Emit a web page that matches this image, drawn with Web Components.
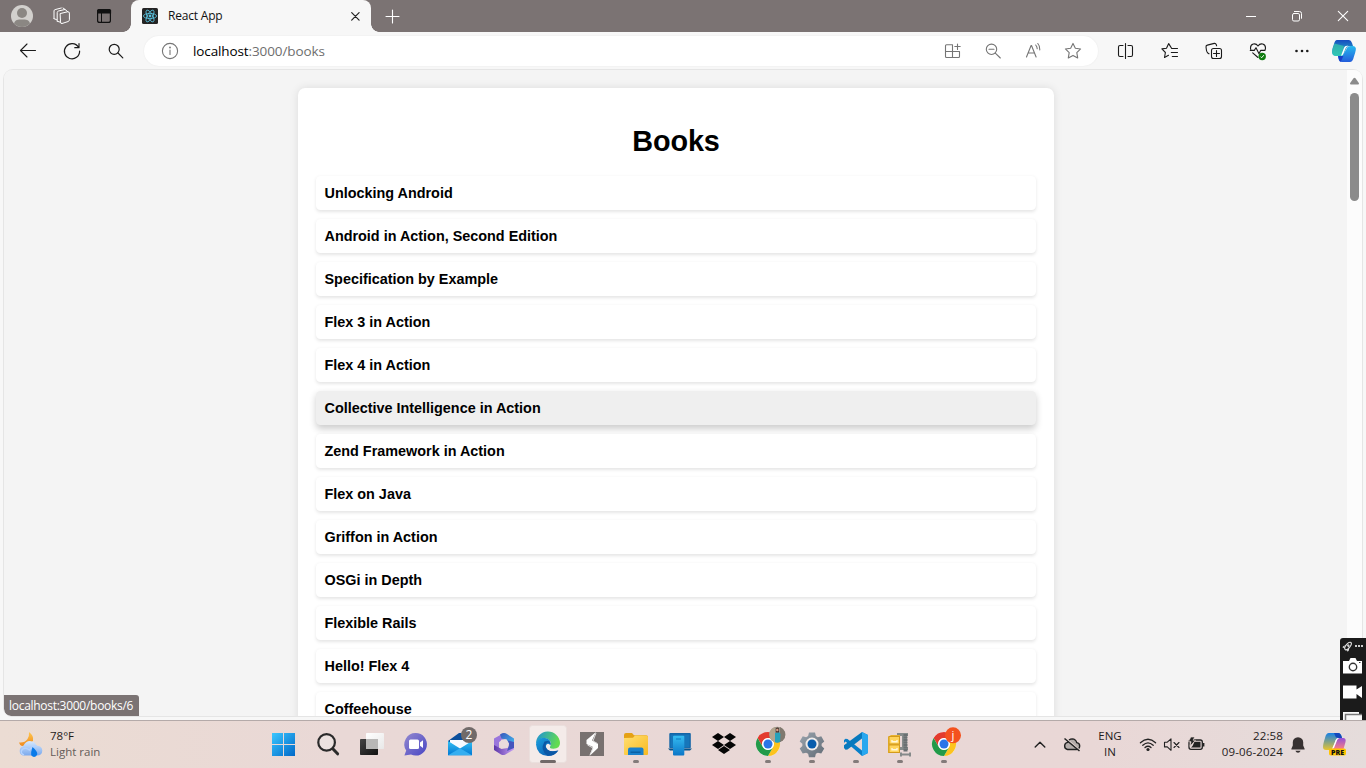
<!DOCTYPE html>
<html lang="en"><head><meta charset="utf-8"><title>React App</title>
<style>html,body{margin:0;height:100%;overflow:hidden;font-family:"Open Sans","Noto Sans",sans-serif}</style></head>
<body><desktop-screen></desktop-screen>
<script>
const line = (c, s, w = 1.2) => `<g fill="none" stroke="${c}" stroke-width="${w}" stroke-linecap="round" stroke-linejoin="round">${s}</g>`;
const grad = (id, a, b, v = 'x2="1" y2="1"') => `<linearGradient id="${id}" ${v}><stop stop-color="${a}"/><stop offset="1" stop-color="${b}"/></linearGradient>`;
const dot = '<rect x="19" y="39" width="6" height="3" rx="1.5" fill="#837b7a"/>';
const chrome = `<circle cx="22" cy="23" r="12" fill="#fff"/><path d="M11.6 17A12 12 0 0 1 32.4 17H22a6 6 0 0 0-5.2 9Z" fill="#e33b2e"/><path d="M32.4 17A12 12 0 0 1 22 35l5.2-9A6 6 0 0 0 22 17Z" fill="#fcc31e"/><path d="M22 35A12 12 0 0 1 11.6 17l5.2 9a6 6 0 0 0 10.4 0Z" fill="#229a49"/><circle cx="22" cy="23" r="5.8" fill="#fff"/><circle cx="22" cy="23" r="4.5" fill="#2b75e8"/>`;

/* Each entry: [width, height, markup] */
const ICONS = {
 avatar:[24,24,'<circle cx="12" cy="12" r="11" fill="#d2d0cd"/><circle cx="12" cy="9" r="5" fill="#8b8783"/><path d="M4 19.5C5 15.6 8 15.4 12 15.4s7 .2 8 4.1a11 11 0 0 1-16 0Z" fill="#8b8783"/>'],
 spaces:[24,24,line('#fff','<path d="M10.5 9.5 17.5 7.8q1.8-.3 1.9 1.3v6.7q0 1.2-1.2 1.7l-6.2 2q-1.5.4-1.5-1.2ZM7.2 17V8.6q0-1.2 1.3-1.6L14.8 5.5M4 14.5V6.9q0-1 1.1-1.3L11.3 4"/><path d="M4 14.7 6.5 15.6M7.2 17.2l2.8.9M13 4l2 1.4 2.6 2.2"/>',1)],
 tabmenu:[24,24,'<rect x="5.6" y="5.6" width="12.800" height="12.800" rx="2" fill="none" stroke="#111" stroke-width="1.200"/><path d="M5 9.600V6.500Q5.300 5 7 5h10.500q1.400 0 1.600 1.500v3.100Z" fill="#111"/><path d="M9.500 9v9.500" stroke="#111"/>'],
 react:[16,16,'<rect width="16" height="16" rx="1.5" fill="#242424"/><g fill="none" stroke="#58bfdc" stroke-width=".85"><ellipse cx="8" cy="8" rx="6.6" ry="2.6"/><ellipse cx="8" cy="8" rx="6.6" ry="2.6" transform="rotate(60 8 8)"/><ellipse cx="8" cy="8" rx="6.6" ry="2.6" transform="rotate(120 8 8)"/></g><circle cx="8" cy="8" r="1.4" fill="#58bfdc"/>'],
 close:[16,16,line('#222','<path d="M4.700 4.700 12.100 12.100M12.100 4.700 4.700 12.100"/>',1.2)],
 plus:[16,16,line('#fff','<path d="M8.500 2v13M2 8.500h13"/>',1.1)],
 min:[16,16,'<path d="M3 8.5h10" stroke="#fff"/>'],
 restore:[16,16,line('#fff','<rect x="3.500" y="5.5" width="7" height="7.5" rx="1.4"/><path d="M5.4 3.500h5.100q2 0 2 2v4.800"/>',1)],
 wclose:[16,16,line('#fff','<path d="M3.3 3.3 12.7 12.7M12.7 3.3 3.3 12.7"/>',1.1)],
 back:[24,24,line('#1b1b1b','<path d="M19.500 11.500H4.700M11 5l-6.500 6.500L11 18"/>',1.1)],
 reload:[24,24,line('#1b1b1b','<path d="M18.5 8.3A7.6 7.6 0 1 0 19.6 12M19 4.7v4h-4.2"/>',1.2)],
 search:[24,24,line('#1b1b1b','<circle cx="10.2" cy="10.3" r="5"/><path d="m14 14 4.8 4.8"/>',1.2)],
 info:[24,24,line('#757575','<circle cx="12" cy="12" r="7.6"/><path d="M12 11v4.5"/>',1.1)+'<circle cx="12" cy="8.5" r=".9" fill="#757575"/>'],
 apps:[24,24,line('#757575','<path d="M11.500 12.5h7v5q0 1-1 1h-12q-1 0-1-1V6.800q0-1 1-1h6v12.700M4.500 12.500h7M16.500 5v5.400M13.800 7.500h5.400"/>',1.1)],
 zoomout:[24,24,line('#757575','<circle cx="10.5" cy="10.3" r="5.2"/><path d="M8 10.3h5M14.3 14.2l5 4.8"/>',1.1)],
 read:[24,24,line('#757575','<path d="M5.500 18 10.100 6.500h.4L15.100 18M7.200 14h6.200M14.700 6q1.500 1.700 1.500 3.800M16.800 4.500q2.500 2.700 2 6.400"/>',1.1)],
 star:[24,24,line('#757575','<path d="m12 4.4 2.35 4.8 5.25.75-3.8 3.7.9 5.25L12 16.4l-4.7 2.5.9-5.25-3.8-3.7 5.25-.75Z"/>',1.1)],
 split:[24,24,line('#1b1b1b','<path d="M9 6.500H6q-1.500 0-1.500 1.500v8q0 1.500 1.500 1.500h3M14 6.500h3q1.500 0 1.500 1.500v8q0 1.500-1.500 1.500h-3M11.500 4.500v15"/>',1.1)],
 favs:[24,24,line('#1b1b1b','<path d="M18.5 9.500h-4.800L10.700 4.600 8.500 9.200l-4.600.7 3.500 3.600-.9 5 4-2.2M13.300 13.500h6.200M14.300 17.500h5.200M14 9.500h5.500"/>',1.1)],
 collect:[24,24,line('#1b1b1b','<rect x="9.500" y="9.500" width="10" height="10" rx="2"/><path d="M14.500 11.500v6M11.500 14.500h6M7 14.800 5.800 14Q4.800 13 4.500 11.500L4 8q-.1-1.600 1.300-1.900l7-1.700q1.500-.2 2 1.200l.3 1.200"/>',1.1)],
 health:[24,24,line('#1b1b1b','<path d="M12 7C9.5 3.4 4.5 4.8 4.5 9q0 .8.3 1.6M12 7c2.5-3.6 7.5-2.2 7.5 2q0 1-.5 2M4.3 11.4h4L10 8.7l3 6 1.6-3.3H19M6.7 13.8 12 18.5"/>',1.1)+'<circle cx="16.200" cy="17.500" r="3.700" fill="#107c10"/><path d="m14.600 17.700 1.100 1 2.100-2.500" fill="none" stroke="#fff"/>'],
 more:[24,24,'<g fill="#1b1b1b"><circle cx="6.500" cy="12" r="1.300"/><circle cx="12" cy="12" r="1.300"/><circle cx="17.300" cy="12" r="1.300"/></g>'],
 copilot:[26,24,'<defs>'+grad('a','#164cc0','#27c5ca','x2="0" y2="1"')+grad('b','#25b9ef','#245ddb','y2="1" x2="0"')+'</defs><path d="M6 1h12q2 0 3 3l1 3h-4q-2 0-3 3l-2.7 7H5q-4 0-4-4 0-3 2-8Q4 1 6 1Z" fill="url(#a)"/><path d="M1.2 12.5Q2 8 3.5 4.5L13 7l-3 9.8H5.2Q2 17 1.2 12.5Z" fill="#39c9a9" opacity=".7"/><path d="M7 17h4.5l4-7q1-3 4-3h2q4 .3 3.3 4-.3 2-2 7-1 5-4 5H11q-3 0-3.4-3Z" fill="url(#b)"/><path d="M7 17h5.4l-2.6 5.8Q8 22 7 17Z" fill="#1940c7"/><path d="m10 16.8 3-8q.6-2 3-2h1.200q-2 1-2.800 3l-2 5q-.7 2-2.400 2Z" fill="#fff"/>'],
 weather:[26,26,'<defs>'+grad('w','#d7e9ff','#7ba9ed','x2="0" y2="1"')+grad('v','#ffc74d','#ef8a20','x2="0" y2="1"')+'</defs><path d="M11 0q5 3.500 4 9l-6 4-5 1Q1.500 13 1 10.500 7 11 9.500 7 11.500 3.500 11 0Z" fill="url(#v)"/><path d="M5 23.500A5 5 0 0 1 5.300 14Q8 8.500 13 9.200q4.500.6 5.500 4.500 5.700.2 5.800 4.800-.1 5-5.300 5Z" fill="url(#w)"/><path d="M6 23Q1.7 21 4 17.8q3-3 7.3.2Q15 13.5 19 14" fill="none" stroke="#b4d3ff" stroke-width="1.5"/><path d="M14.500 15q5.500 4.600 4.700 7.700-3 4.300-6 .5-.5-3 1.300-8.200Z" fill="#087ae9"/>'],
 start:[44,47,'<defs>'+grad('s','#3bc7ff','#0068c8')+'</defs><path d="M10 12h11v11H10ZM22 12h11v11H22ZM10 24h11v11H10ZM22 24h11v11H22Z" fill="url(#s)"/>'],
 tsearch:[44,47,'<circle cx="20.6" cy="21.4" r="8.3" fill="#ece2e0" stroke="#2a2a2a" stroke-width="2.2"/><path d="m26.8 27.8 4.800 5" stroke="#2a2a2a" stroke-width="3" stroke-linecap="round"/>'],
 taskview:[44,47,'<defs>'+grad('t','#444','#111')+grad('u','#fff','#e8e8e8')+'</defs><rect x="10" y="18" width="18" height="16" rx=".8" fill="url(#t)"/><rect x="16" y="12" width="18" height="16" rx=".8" fill="url(#u)"/><path d="M16 18h12v10H16Z" fill="#b8b7b6"/>'],
 chat:[44,47,'<defs>'+grad('c','#9389cf','#4946c4')+'</defs><path d="M21.7 12A11.3 11.3 0 1 1 17 33.6L10.4 34.5l1.8-5A11.3 11.3 0 0 1 21.7 12Z" fill="url(#c)"/><rect x="15" y="18.5" width="10" height="9.4" rx="1.5" fill="#fff"/><path d="m26 21.5 3-2.2v7.6l-3-2.2Z" fill="#fff"/>'],
 mail:[44,47,'<defs>'+grad('m','#35c0f2','#0078d4','y2="1" x2="0"')+'</defs><path d="M10 20 21 12h2l11 8v3H10Z" fill="#0b4f9c"/><path d="M12 19h20v3l-9 7h-2l-9-7Z" fill="#f7fbff"/><path d="M10 20l12 7.500L34 20v14.200H10Z" fill="url(#m)"/><path d="m10 34.200 12-7 12 7Z" fill="#35aef0"/><circle cx="31" cy="14" r="8" fill="#716a69"/><text x="31" y="18.4" text-anchor="middle" font-size="12" fill="#fff">2</text>'],
 m365:[44,47,'<defs>'+grad('o','#5b35a8','#c7a0f5','x2="1" y2="0"')+grad('p','#3755bb','#44c3f4')+'</defs><path d="M22 12 12 17.500v11l5 2V21l8-4Z" fill="#9a76dc"/><path d="M18 13.500q4-2.500 7-.500l7 4.500v8L26.500 22l-2-3.500-5-1Z" fill="url(#p)"/><path d="M32 24v4.500l-9 5.200q-2 .8-4-.3L12 29v-5l7.500 4 6-1Z" fill="url(#o)"/><path d="m26 19.500 6 1.500v6l-7 3 2-6Z" fill="#4655bd"/><path d="m19.500 18.500 5 0 2.500 4-2.500 4.500h-5L17 22.500Z" fill="#eadbdc"/>'],
 edge:[44,47,'<defs>'+grad('e','#1c8fdc','#62dc50','x2="1" y2=".3"')+grad('f','#1aa0e0','#0a4ea6','x2="1" y2="1"')+'</defs><rect x="3.5" y="4.5" width="37" height="37" rx="3" fill="#f4ebe9" stroke="#eadfdd"/><path d="M10 23A12 12 0 0 1 34 22q0 5.500-6.500 5.800-5.500 0-2.800-3.300Q26 19 19.500 17 13 16.500 10 23Z" fill="url(#e)"/><path d="M10 23.500q1-6.500 8-6.700 7.500.7 6.700 7.700Q21.500 21 19.800 25q.7 7.300 12.200 4.500Q29 35 22 35 11 34.500 10 23.500Z" fill="url(#f)"/><path d="M18.500 20.500q-5 8.500 3 14 6.500.5 11-5-7 2.500-11.200-1-3-3.200-1-6 2-2.300 4.400 1-.5-5-6.200-3Z" fill="#0b57a5"/><rect x="14" y="39" width="16" height="3" rx="1.5" fill="#716968"/>'],
 bolt:[44,47,'<path d="M10 11h24v24H10Z" fill="#787170"/><path d="m26 11-9.5 8v4l6.500 3-3.500 9L28 27v-4l-6-3.500Z" fill="#fff"/><path d="m26 12-3 8 4.5 2.500M20 34l3-7-5.500-3" fill="none" stroke="#dedcdc"/>'],
 folder:[44,47,'<defs>'+grad('g','#ffdf72','#f9b91e')+'</defs><path d="M10 14q0-2 2-2h6l2 2.3h12q2 0 2 2V33H10Z" fill="#e5a115"/><path d="m10 17 9-.2 2-2.200h11q2 0 2 2V33q0 1-1 1H11q-1 0-1-1Z" fill="url(#g)"/><path d="M14 34v-5.500q0-2 2-2h11.500q2 0 2 2V34Z" fill="#1980cb"/><path d="M16.500 31.200h10" stroke="#0a5c9f" stroke-width="1.300"/>'+dot],
 phone:[44,47,'<defs>'+grad('h','#36bdf1','#0b76c7','x2="0" y2="1"')+'</defs><rect x="11.3" y="12" width="21.5" height="15.3" rx="1" fill="#1265a7"/><rect x="12.5" y="13.5" width="19" height="13" fill="#1676ba"/><path d="M10 27.500h24l-2 2H12Z" fill="#095389"/><rect x="15" y="14.700" width="11.300" height="19.800" rx="1" fill="url(#h)"/><path d="M18 18h5" stroke="#087cc1"/>'],
 dropbox:[44,47,'<path d="m16 12 6 4-6 4-6-4ZM28 12l6 4-6 4-6-4ZM16 20l6 4-6 4-6-4ZM28 20l6 4-6 4-6-4ZM22 25l6 4-6 4-6-4Z" fill="#050505"/>'],
 chromea:[44,47,chrome+'<defs><clipPath id="k"><circle cx="31.300" cy="13.700" r="8"/></clipPath></defs><g clip-path="url(#k)"><path d="M23 5h17v17H23Z" fill="#9b9488"/><path d="M23 6h6v16h-6Z" fill="#b3a58e"/><path d="M34 5h6v17h-6Z" fill="#80796f"/><path d="m29 12 4-1 1.500 2-.5 9h-5Z" fill="#26a2ba"/><path d="M29.800 7.500q1.700-2 3.200 0v4h-3.200Z" fill="#4c3430"/><circle cx="31.300" cy="9" r="1.200" fill="#d6a187"/></g>'+dot],
 gear:[44,47,'<defs>'+grad('q','#99a3ad','#626c76')+'</defs><path d="m18.8 11 6.4 0 .9 3.6 2.1 1.2 3.6-1 3.2 5.5-2.8 2.5v2.3l2.8 2.6-3.2 5.5-3.6-1-2.1 1.2-.9 3.6h-6.4l-.9-3.6-2.1-1.2-3.6 1L9 27.7l2.8-2.6v-2.3L9 20.3l3.2-5.500 3.6 1 2.1-1.200Z" transform="translate(1.200 1.200) scale(.945)" fill="url(#q)"/><circle cx="22" cy="23" r="6.500" fill="#f1ecea"/><circle cx="22" cy="23" r="4.500" fill="#075cac"/>'+dot],
 code:[44,47,'<path d="m28 11 6 3v18l-6 3-16.5-14.5L10 22v-3l1.5-1.2 2 .2L28 29.4Z" fill="#087fc9"/><path d="M28 11v24l6-3V14Z" fill="#28a7ef"/><path d="m28 11 0 6.500-14.500 11-2 .300L10 27v-2.800Z" fill="#0879bd"/>'+dot],
 zip:[44,47,'<path d="M19 12h11v3h-1v11h1v3H19v-3h5V15h-5Z" fill="#858b8b"/><path d="M27.500 13v18" stroke="#6a7072" stroke-width="4" stroke-dasharray="2 .5"/><path d="m10 16 3-2h9v18H10Z" fill="#e8b32f"/><rect x="11" y="15.500" width="10.500" height="7.500" fill="#ffd45c" stroke="#d39b1c"/><rect x="11" y="24" width="10.500" height="7.500" fill="#ffd45c" stroke="#d39b1c"/><path d="M14 19v1.700h5V19M14 27v1.700h5V27" fill="none" stroke="#fff8dc" stroke-width="1.400"/><path d="M22 33.500h11M23 31.500v4M32 31.500v4" stroke="#858a8a" stroke-width="2"/>'+dot],
 chromej:[44,47,chrome+'<circle cx="31" cy="14.300" r="8" fill="#f4511e"/><text x="31" y="18" text-anchor="middle" font-size="11.500" fill="#fff">j</text>'+dot],
 up:[24,24,line('#222','<path d="m7.2 14.000 4.800-4.800 4.800 4.800"/>',1.4)],
 cloud:[24,24,'<path d="M7.500 16.500A3.600 3.600 0 0 1 7.800 9.400q1-3.500 4.400-3.500 3.600.2 4.500 3.700 3 .3 3 3.400-.2 3.500-3.600 3.500Z" fill="#b5adab" stroke="#222" stroke-width="1.400"/><path d="m5.500 5 14.500 12.500" stroke="#e8d8d5" stroke-width="1.500"/><path d="m4.500 5.500 15 12.500" stroke="#222" stroke-width="1.500"/>'],
 wifi:[24,24,line('#222','<path d="M4.400 9.800q7.600-7 15.200 0M6.800 12.200q5.200-4.700 10.400 0M9 14.500q3-2.600 6 0"/>',1.3)+'<circle cx="12" cy="16.500" r="1.600" fill="#222"/>'],
 vol:[24,24,line('#222','<path d="M4.500 9.200h2.800l3.700-3.400v11.500l-3.700-3.400H4.500ZM14 9.500l5 5M19 9.500l-5 5"/>',1.1)],
 battery:[24,24,'<rect x="5" y="7" width="13.300" height="9.300" rx="2" fill="none" stroke="#222" stroke-width="1.300"/><path d="M10.500 8.800h6v5.700H7l1.500-1.500Z" fill="#222"/><path d="M19.500 10v3.500" stroke="#222" stroke-width="1.800"/><path d="M6.800 4h4L9 7.200h2.500L6 13.200l1-4.500H4.500Z" fill="#222" stroke="#e8d8d5" stroke-width=".700"/>'],
 bell:[24,24,'<path d="M5.400 15.700 6.800 12.500V9.100q.3-4.400 5.200-4.800 4.900.4 5.200 4.800v3.400l1.400 3.200v.9H5.400Z" fill="#373131"/><path d="M9.400 17.700h5.200q-.8 2-2.600 2t-2.600-2Z" fill="#373131"/>'],
 pre:[28,26,'<defs>'+grad('x','#1680e6','#e9c430','x2="0" y2="1"')+grad('y','#9251d8','#fa7f82','x2="0" y2="1"')+'</defs><path d="M8 1h9q3 0 4 5h-4q-2 0-3 4l-3 8H5q-3 0-3-3 0-3 2-9Q5 1 8 1Z" fill="url(#x)"/><path d="M13 1h4q3 0 4 5h-3l-3-.6Z" fill="#1348bd"/><path d="m12 17 3-7q1-4 4-4h3q3.400 0 2.500 4l-2 7Z" fill="url(#y)"/><path d="m11 17 3-7q1-4 4-4-2 1-3 5l-2 5Z" fill="#fff"/><rect x="8" y="16.500" width="17" height="7" rx="1.800" fill="#ffc400"/><text x="16.500" y="22.700" text-anchor="middle" font-size="7" font-weight="800" fill="#111">PRE</text>'],
 rocket:[26,14,'<g transform="rotate(40 8 7)" fill="none" stroke="#ddd"><ellipse cx="8" cy="7" rx="2" ry="4.500" stroke-width="1.200"/><circle cx="8" cy="6.500" r=".700" stroke-width="1"/><path d="M6.200 8 5 10v1l2-.500M9.800 8l1.200 2v1l-2-.500"/></g><path d="M15 6h2v2h-2ZM18 6h2v2h-2ZM21 6h2v2h-2Z" fill="#ccc"/>'],
 camera:[26,20,'<path d="M3 5h6l1.500-3h5L17 5h5v12.500H3Z" fill="#fff"/><circle cx="13" cy="11" r="3.700" fill="#fff" stroke="#333" stroke-width="1.400"/><path d="M19 6.500h1.500" stroke="#333"/>'],
 video:[26,20,'<path d="M3 3.500h13.500v4L22 4v12l-5.500-4v4.500H3Z" fill="#fff"/>'],
 shots:[26,12,'<path d="M3 0h16v2h3v10H3Z" fill="#f8f8f8"/><path d="M5.500 12V2.500H22" fill="none" stroke="#777" stroke-width="1.500"/>']
};
const tpl = html => { const t = document.createElement('template'); t.innerHTML = html; return t; };
const define = (name, html) => { const t = tpl(html);
 customElements.define(name, class extends HTMLElement{ constructor(){ super(); this.attachShadow({mode:'open'}).append(t.content.cloneNode(true)); } }); };

customElements.define('ui-icon', class extends HTMLElement{
 constructor(){ super(); this.attachShadow({mode:'open'}); }
 connectedCallback(){ const [w,h,s] = ICONS[this.getAttribute('name')];
  this.shadowRoot.innerHTML = `<style>:host{display:flex;flex:none;align-items:center;justify-content:center}svg{display:block;flex:none;overflow:visible}</style><svg width="${w}" height="${h}" viewBox="0 0 ${w} ${h}">${s}</svg>`; }
});
define('tab-strip', `<style>
 :host{display:flex;height:32px;background:#7b7373;align-items:center;box-sizing:border-box}
 .a{width:44px}.b{width:36px}.c{width:48px}.tab{margin-left:3px;width:240px;height:32px;background:#f7f7f7;border-radius:8px 8px 0 0;display:flex;align-items:center;box-sizing:border-box;padding:0 8px 0 11px;position:relative}
 .tab:before,.tab:after{content:"";position:absolute;bottom:0;width:8px;height:8px}
 .tab:before{left:-8px;background:radial-gradient(circle at 0 0,transparent 7.500px,#f7f7f7 8px)}
 .tab:after{right:-8px;background:radial-gradient(circle at 100% 0,transparent 7.500px,#f7f7f7 8px)}
 span{flex:1;padding-left:10px;font-size:12px;letter-spacing:-.2px;line-height:32px;color:#111}
 .n{width:42px}.w{width:46px}.fill{flex:1}
 </style><ui-icon class="a" name="avatar"></ui-icon><ui-icon class="b" name="spaces"></ui-icon><ui-icon class="c" name="tabmenu"></ui-icon>
 <div class="tab"><ui-icon name="react"></ui-icon><span>React App</span><ui-icon name="close"></ui-icon></div><ui-icon class="n" name="plus"></ui-icon><div class="fill"></div>
 <ui-icon class="w" name="min"></ui-icon><ui-icon class="w" name="restore"></ui-icon><ui-icon class="w" name="wclose"></ui-icon>`);
define('address-bar', `<style>
 :host{display:flex;width:954px;height:30px;box-sizing:border-box;border-radius:15px;background:#fff;align-items:center;padding:0 5px 0 14px;box-shadow:0 0 2px #0001}
 span{flex:1;padding-left:11px;font-size:13.500px;letter-spacing:-.11px;line-height:30px;color:#6e6e6e}b{font-weight:400;color:#000}.i{width:40px}
 </style><ui-icon name="info"></ui-icon><span><b>localhost</b>:3000/books</span>
 <ui-icon class="i" name="apps"></ui-icon><ui-icon class="i" name="zoomout"></ui-icon><ui-icon class="i" name="read"></ui-icon><ui-icon class="i" name="star"></ui-icon>`);
define('tool-bar', `<style>:host{display:flex;height:38px;background:#f7f7f7;align-items:center;padding:0 2px 0 6px;box-sizing:border-box}ui-icon{width:44px}address-bar{margin:0 6px}.l{width:40px}</style>
 <ui-icon name="back"></ui-icon><ui-icon name="reload"></ui-icon><ui-icon name="search"></ui-icon><address-bar></address-bar>
 <ui-icon name="split"></ui-icon><ui-icon name="favs"></ui-icon><ui-icon name="collect"></ui-icon><ui-icon name="health"></ui-icon><ui-icon name="more"></ui-icon><ui-icon class="l" name="copilot"></ui-icon>`);
define('book-item', `<style>:host{display:block;height:34px;flex:none;box-sizing:border-box;padding:0 8.500px;border-radius:4.500px;background:#fff;box-shadow:0 1.800px 3.600px rgba(0,0,0,.1);font:bold 14.400px/34px "Liberation Sans",Arial,sans-serif;color:#000}
 :host([active]){background:#efefef;box-shadow:0 3.600px 7.200px rgba(0,0,0,.2)}</style><slot></slot>`);
define('book-list', `<style>:host{display:flex;flex-direction:column;box-sizing:border-box;width:756px;height:900px;flex:none;padding:18px;background:#fff;border-radius:7.200px;box-shadow:0 0 9px rgba(0,0,0,.1)}
 h1{margin:18px 0 18px;text-align:center;font:bold 28.800px/34px "Liberation Sans",Arial,sans-serif;letter-spacing:-.1px;color:#000}.rows{display:flex;flex-direction:column;gap:9px}</style><h1>Books</h1><div class="rows"><slot></slot></div>`);
define('scroll-bar', `<style>:host{display:flex;flex-direction:column;align-items:center;width:15px;background:#fcfcfc;padding-top:7px;box-sizing:border-box}svg{display:block}.t{margin-top:8px;width:9px;height:108px;border-radius:4.500px;background:#8b8b8b}</style>
 <svg width="9" height="8"><path d="M3.500 1.300Q4.500 0 5.500 1.300L8.800 6q.6 1.500-.8 1.500H1Q-.4 7.500.2 6Z" fill="#8b8b8b"/></svg><div class="t"></div>`);
define('status-tip', `<style>:host{display:block;position:absolute;left:0;bottom:0;width:135px;height:21px;box-sizing:border-box;background:#7b7373;border-radius:0 3px 0 7px;padding-left:5px;color:#fff;font-size:12px;letter-spacing:-.28px;line-height:21px;white-space:nowrap}</style><slot></slot>`);
define('page-view', `<style>:host{display:block;height:650px;background:#f7f7f7;padding:0 4px;box-sizing:border-box}
 .v{position:relative;display:flex;height:646px;overflow:hidden;background:#f4f4f4;border-radius:8px 8px 4px 7px}
 .f{border-radius:9px 9px 5px 8px;box-shadow:0 0 0 1px #e5e5e5}.m{flex:1;display:flex;justify-content:center;padding-top:18px;box-sizing:border-box;padding-left:1px}</style>
 <div class="f"><div class="v"><div class="m"><book-list>
 <book-item>Unlocking Android</book-item><book-item>Android in Action, Second Edition</book-item><book-item>Specification by Example</book-item><book-item>Flex 3 in Action</book-item><book-item>Flex 4 in Action</book-item><book-item active>Collective Intelligence in Action</book-item><book-item>Zend Framework in Action</book-item><book-item>Flex on Java</book-item><book-item>Griffon in Action</book-item><book-item>OSGi in Depth</book-item><book-item>Flexible Rails</book-item><book-item>Hello! Flex 4</book-item><book-item>Coffeehouse</book-item>
 </book-list></div><scroll-bar></scroll-bar><status-tip>localhost:3000/books/6</status-tip></div></div>`);
define('capture-panel', `<style>:host{display:flex;flex-direction:column;position:absolute;right:0;top:638px;width:26px;height:82px;overflow:hidden;background:#1b1b1b;border-radius:3px 0 0 0;box-sizing:border-box;padding-top:1px}.c{height:26px}.s{margin-top:7px}</style>
 <ui-icon name="rocket"></ui-icon><ui-icon class="c" name="camera"></ui-icon><ui-icon class="c" name="video"></ui-icon><ui-icon class="s" name="shots"></ui-icon>`);
define('task-bar', `<style>:host{display:flex;height:48px;border-top:1px solid #b4aaa9;box-sizing:border-box;background:linear-gradient(90deg,#ebdcd3,#e9d8d6 25%,#e9d7d6 80%,#e5dcdb);align-items:center;color:#1f1b1b;font-size:11.500px;line-height:16px}
 .wi{width:26px;margin-left:18px}.wt{width:218px;padding:0 0 2px 6px;box-sizing:border-box}.wt span{color:#655c59}
 .apps{display:flex;width:704px}.sp{width:58px}.up{width:32px}.cl{width:32px}.lang{width:44px;padding-bottom:1px;text-align:center}.wf{margin-left:4px}.clock{width:75px;padding-bottom:2px;text-align:right;letter-spacing:.12px}.be{width:30px}.pr{width:43px}
 </style><ui-icon class="wi" name="weather"></ui-icon><div class="wt">78°F<br><span>Light rain</span></div>
 <div class="apps">${['start','tsearch','taskview','chat','mail','m365','edge','bolt','folder','phone','dropbox','chromea','gear','code','zip','chromej'].map(n=>`<ui-icon name="${n}"></ui-icon>`).join('')}</div>
 <div class="sp"></div><ui-icon class="up" name="up"></ui-icon><ui-icon class="cl" name="cloud"></ui-icon><div class="lang">ENG<br>IN</div><ui-icon class="wf" name="wifi"></ui-icon><ui-icon name="vol"></ui-icon><ui-icon name="battery"></ui-icon>
 <div class="clock">22:58<br>09-06-2024</div><ui-icon class="be" name="bell"></ui-icon><ui-icon class="pr" name="pre"></ui-icon>`);
define('desktop-screen', `<style>:host{display:flex;flex-direction:column;position:relative;width:1366px;height:768px;overflow:hidden}</style>
 <tab-strip></tab-strip><tool-bar></tool-bar><page-view></page-view><task-bar></task-bar><capture-panel></capture-panel>`);
</script></body></html>
